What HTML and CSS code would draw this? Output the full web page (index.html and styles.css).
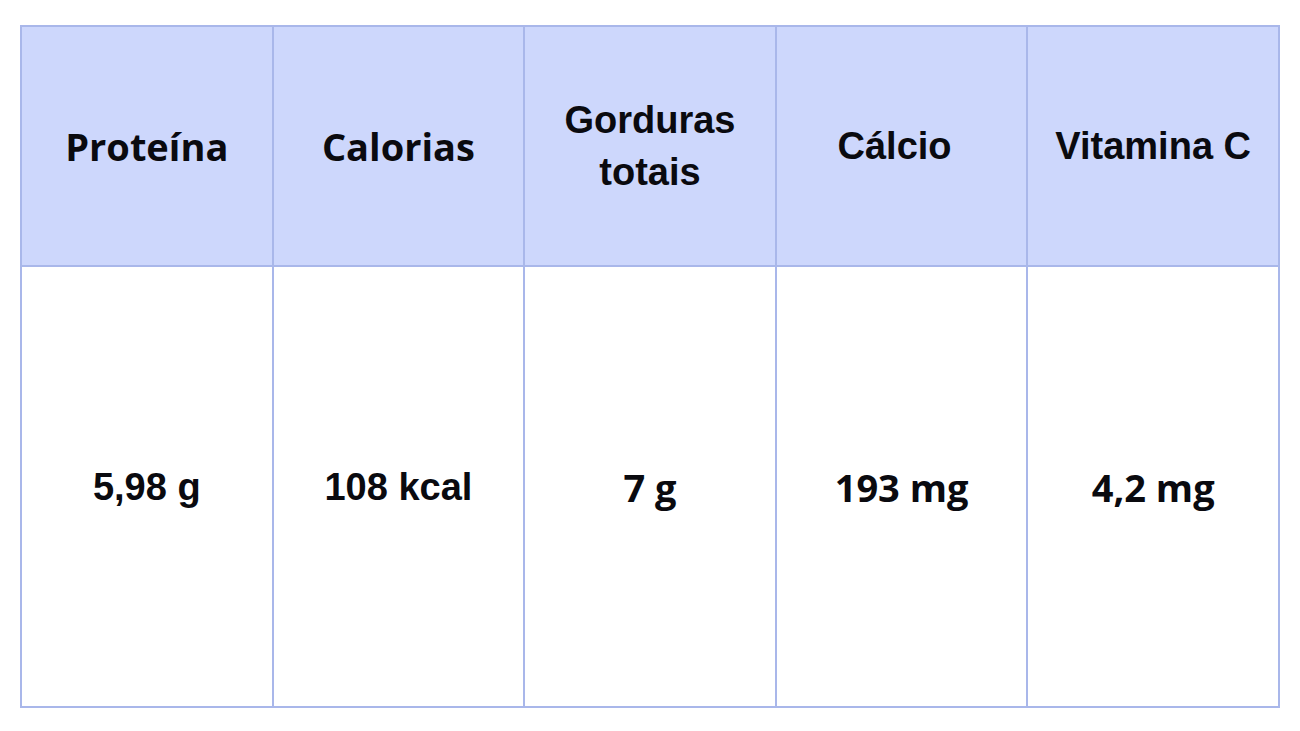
FILE: index.html
```html
<!DOCTYPE html>
<html lang="pt">
<head>
<meta charset="utf-8">
<title>Nutrição</title>
<link rel="stylesheet" href="styles.css">
</head>
<body>
<table class="nutri">
  <thead>
    <tr>
      <th class="open">Proteína</th>
      <th class="open">Calorias</th>
      <th class="lib">Gorduras<br>totais</th>
      <th class="lib offset-left">Cálcio</th>
      <th class="lib">Vitamina C</th>
    </tr>
  </thead>
  <tbody>
    <tr>
      <td class="lib">5,98 g</td>
      <td class="lib">108 kcal</td>
      <td class="open">7 g</td>
      <td class="open">193 mg</td>
      <td class="open">4,2 mg</td>
    </tr>
  </tbody>
</table>
</body>
</html>
```

FILE: styles.css
```css
html, body {
  margin: 0;
  padding: 0;
  background: #ffffff;
}
body {
  padding: 25px 20px 0 20px;
}
.nutri {
  border-collapse: collapse;
  width: 1260px;
  table-layout: fixed;
  color: #0a0a0f;
}
.nutri th,
.nutri td {
  border: 2px solid #a9b7ea;
  text-align: center;
  vertical-align: middle;
  font-weight: bold;
  font-size: 38px;
  line-height: 52px;
  padding: 0;
}
.nutri thead tr {
  height: 240px;
  background: #cdd7fc;
}
.nutri tbody tr {
  height: 441px;
}
.nutri .offset-left {
  padding-right: 14px;
}
.open {
  font-family: "Open Sans", "Noto Sans", sans-serif;
}
.lib {
  font-family: "Liberation Sans", Arial, sans-serif;
}
```
